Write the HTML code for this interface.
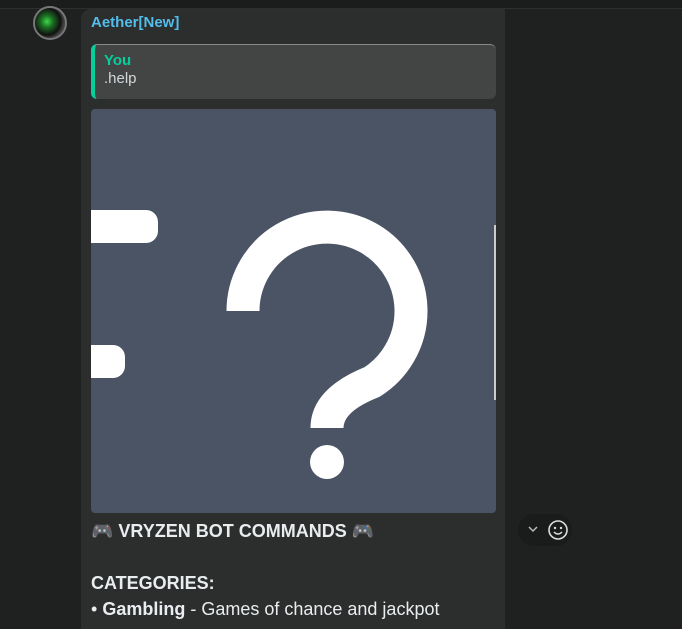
<html><head><style>
body{margin:0;width:682px;height:619px;overflow:hidden;background:#1f2020;font-family:"Segoe UI","Liberation Sans",sans-serif;position:relative}
.top{position:absolute;left:0;top:0;width:682px;height:8px;background:#1b1c1c;border-bottom:1px solid #2e3030}
.bub{position:absolute;left:81px;top:9px;width:424px;height:620px;background:#2c2d2d;border-radius:10px 0 0 0}
.av{position:absolute;left:33px;top:6px;width:34px;height:34px;border-radius:50%;background:radial-gradient(circle at 40% 45%,#3dd84a 0,#1c6d22 25%,#111 55%,#444 70%,#222 100%);border:2px solid #777;box-sizing:border-box}
.name{position:absolute;left:91px;top:14px;color:#53bdeb;font-weight:bold;font-size:15px}
.q{position:absolute;left:91px;top:44px;width:405px;height:55px;background:#434444;border-radius:6px;border-left:4px solid #06cf9c;box-sizing:border-box;border-top:1px solid #888}
.q .y{position:absolute;left:9px;top:7px;color:#06cf9c;font-weight:bold;font-size:15px}
.q .h{position:absolute;left:9px;top:25px;color:#d1d7db;font-size:15px}
.img{position:absolute;left:91px;top:109px;width:405px;height:404px;background:#4a5465;border-radius:4px;overflow:hidden}
.t{position:absolute;left:91px;color:#e9edef;font-size:18px;white-space:nowrap}
.pill{position:absolute;left:518px;top:514px;width:54px;height:32px;border-radius:16px;background:#1a1b1b;color:#ccc}
</style></head><body>
<div class="top"></div>
<div class="bub"></div>
<div class="av"></div>
<div class="name">Aether[New]</div>
<div class="q"><div class="y">You</div><div class="h">.help</div></div>
<div class="img"><svg width="405" height="404" viewBox="91 109 405 404">
<rect x="70" y="210" width="88" height="33" rx="12" fill="#fff"/>
<rect x="70" y="345" width="55" height="33" rx="12" fill="#fff"/>
<path d="M243 311 A84 84 0 1 1 372 382 Q327 400 327 428" stroke="#fff" stroke-width="33" fill="none"/>
<circle cx="327" cy="462" r="17" fill="#fff"/>
<rect x="494" y="225" width="2" height="175" fill="#ccc"/>
</svg></div>
<div class="t" style="top:521px;font-weight:bold">🎮 VRYZEN BOT COMMANDS 🎮</div>
<div class="t" style="top:573px;font-weight:bold">CATEGORIES:</div>
<div class="t" style="top:599px">• <b>Gambling</b> - Games of chance and jackpot</div>
<div class="pill"><svg width="54" height="32"><path d="M11 13 l4 4 4-4" stroke="#bbb" stroke-width="1.5" fill="none"/><circle cx="40" cy="16" r="9" stroke="#ddd" stroke-width="1.6" fill="none"/><circle cx="37" cy="14" r="1.2" fill="#ddd"/><circle cx="43" cy="14" r="1.2" fill="#ddd"/><path d="M36 18 q4 4 8 0" stroke="#ddd" stroke-width="1.5" fill="none"/></svg></div>
</body></html>
